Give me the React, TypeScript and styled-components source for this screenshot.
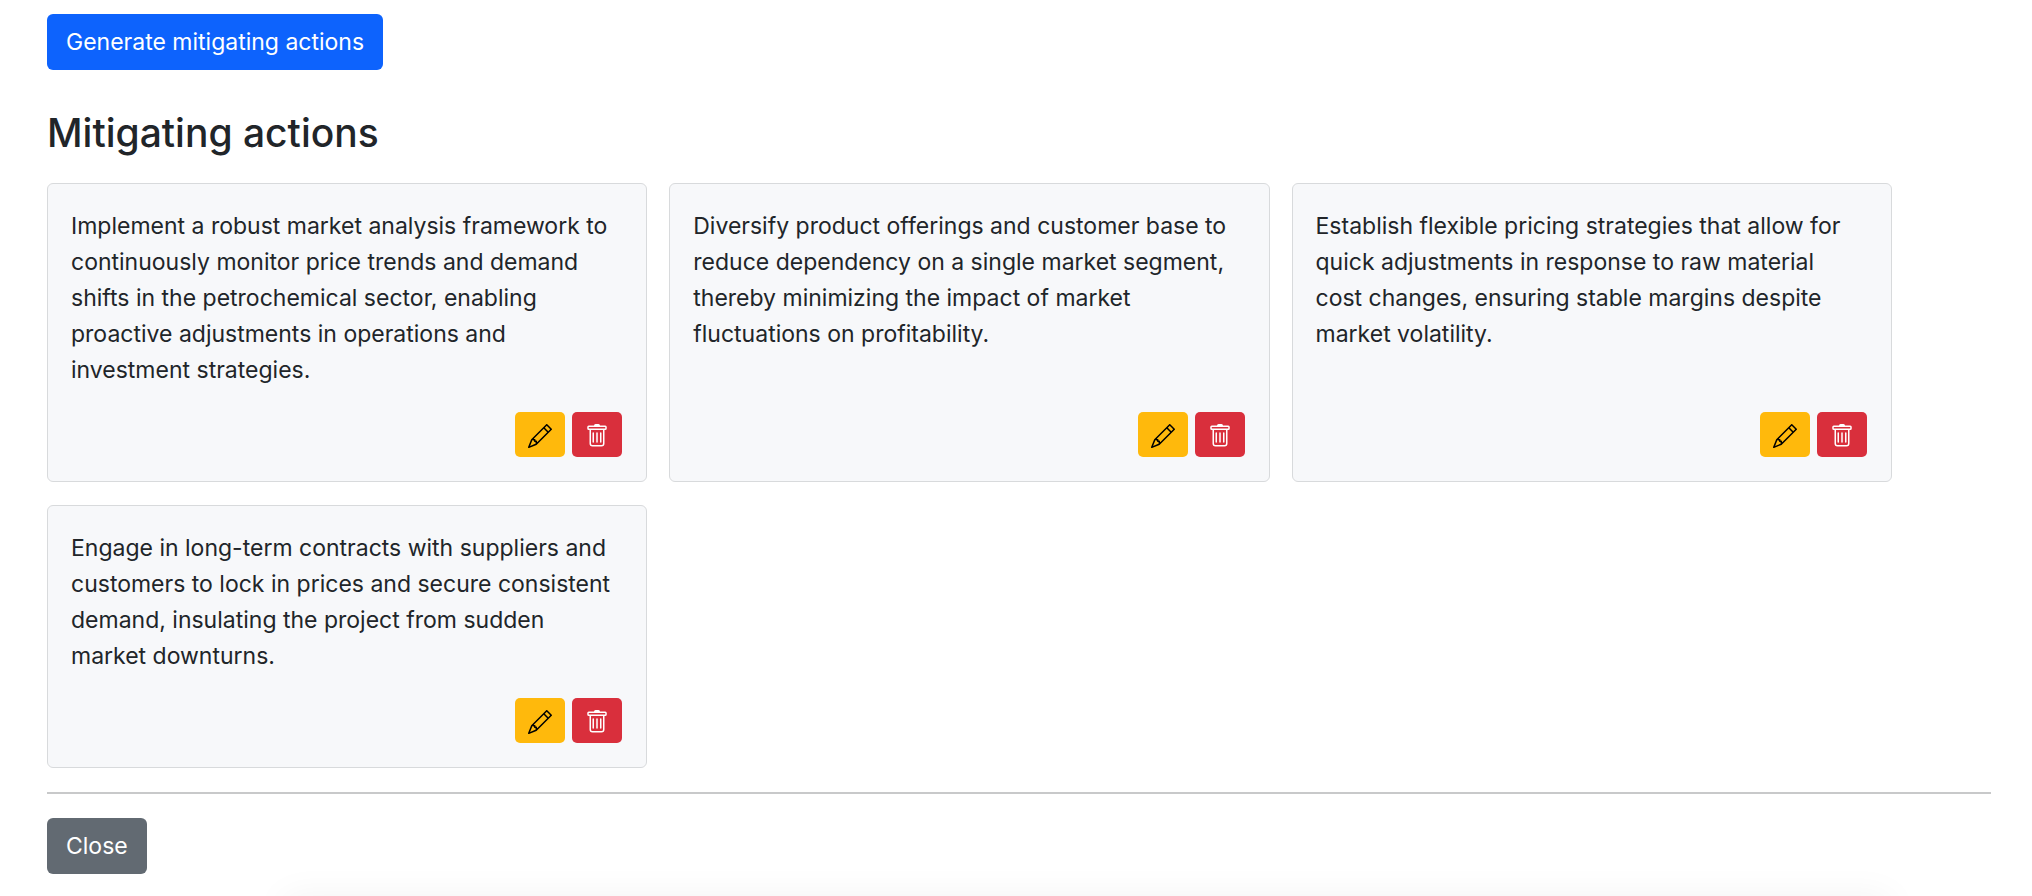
import React from "react";
import styled, { createGlobalStyle, css } from "styled-components";
import { BsPencil, BsTrash } from "react-icons/bs";

const GlobalStyle = createGlobalStyle`
  *, *::before, *::after { box-sizing: border-box; }
  body {
    margin: 0;
    background: #fff;
    color: #212529;
    font-family: Inter, "Liberation Sans", sans-serif;
    font-size: 23px;
    line-height: 36px;
  }
`;

const Page = styled.main`
  position: relative;
  min-height: 100vh;
  padding: 14px 41px 22px 47px;
  overflow: hidden;
`;

type Tone = "primary" | "secondary" | "warning" | "danger";

const tones: Record<Tone, { background: string; color: string }> = {
  primary: { background: "#0d63fd", color: "#fff" },
  secondary: { background: "#626a72", color: "#fff" },
  warning: { background: "#ffb90c", color: "#000" },
  danger: { background: "#d92f3c", color: "#fff" },
};

const buttonBase = css<{ $tone: Tone }>`
  display: flex;
  align-items: center;
  justify-content: center;
  border: 0;
  font: inherit;
  cursor: pointer;
  background: ${({ $tone }) => tones[$tone].background};
  color: ${({ $tone }) => tones[$tone].color};
`;

const Button = styled.button<{ $tone: Tone }>`
  ${buttonBase}
  height: 56px;
  padding: 0 19px;
  border-radius: 6px;
`;

const IconButton = styled.button<{ $tone: Tone }>`
  ${buttonBase}
  width: 50px;
  height: 45px;
  padding: 2px 0 0;
  border-radius: 5px;
`;

const Title = styled.h2`
  margin: 38px 0 26px;
  font-size: 39px;
  font-weight: 500;
  line-height: 49px;
`;

const CardGrid = styled.ul`
  display: grid;
  grid-template-columns: repeat(3, minmax(0, 1fr));
  gap: 23px 22px;
  width: calc(95% - 2px);
  margin: 0;
  padding: 0;
  list-style: none;
`;

const Card = styled.li`
  display: flex;
  flex-direction: column;
  justify-content: space-between;
  gap: 24px;
  padding: 24px 24px 24px 23px;
  border: 1px solid #d8dadc;
  border-radius: 6px;
  background: #f7f8fa;
`;

const CardText = styled.p`
  margin: 0;
`;

const CardActions = styled.div`
  display: flex;
  justify-content: flex-end;
  gap: 7px;
`;

const Divider = styled.hr`
  height: 2px;
  margin: 24px 0;
  border: 0;
  background: #c8c9ca;
`;

const BottomShade = styled.div`
  position: absolute;
  top: 100%;
  left: 14%;
  right: 7%;
  height: 40px;
  box-shadow: 0 0 36px rgba(0, 0, 0, 0.05);
  pointer-events: none;
`;

const actions = [
  "Implement a robust market analysis framework to continuously monitor price trends and demand shifts in the petrochemical sector, enabling proactive adjustments in operations and investment strategies.",
  "Diversify product offerings and customer base to reduce dependency on a single market segment, thereby minimizing the impact of market fluctuations on profitability.",
  "Establish flexible pricing strategies that allow for quick adjustments in response to raw material cost changes, ensuring stable margins despite market volatility.",
  "Engage in long-term contracts with suppliers and customers to lock in prices and secure consistent demand, insulating the project from sudden market downturns.",
];

function ActionCard({ text }: { text: string }) {
  return (
    <Card>
      <CardText>{text}</CardText>
      <CardActions>
        <IconButton type="button" $tone="warning" aria-label="Edit action">
          <BsPencil size={24} />
        </IconButton>
        <IconButton type="button" $tone="danger" aria-label="Delete action">
          <BsTrash size={24} />
        </IconButton>
      </CardActions>
    </Card>
  );
}

export default function App() {
  return (
    <>
      <GlobalStyle />
      <Page>
        <Button type="button" $tone="primary">Generate mitigating actions</Button>
        <Title>Mitigating actions</Title>
        <CardGrid>
          {actions.map((text) => (
            <ActionCard key={text} text={text} />
          ))}
        </CardGrid>
        <Divider />
        <Button type="button" $tone="secondary">Close</Button>
        <BottomShade />
      </Page>
    </>
  );
}
